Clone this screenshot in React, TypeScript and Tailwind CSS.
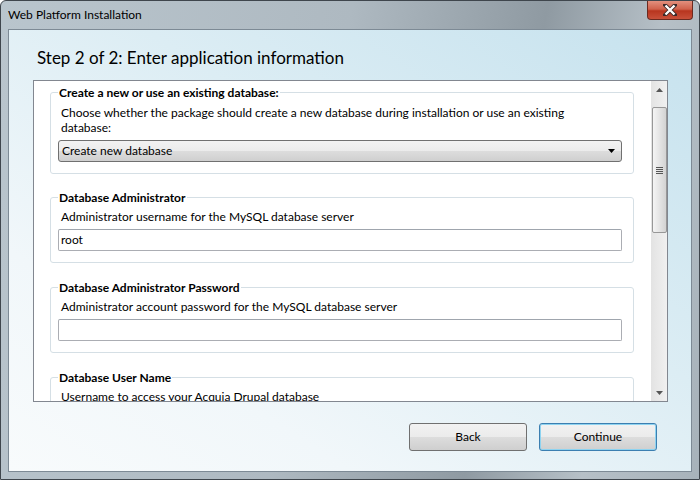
import React from "react";

const font = { fontFamily: "Lato, 'Noto Sans', sans-serif" };

function Group({ title, children }: { title: string; children: React.ReactNode }) {
  return (
    <div className="relative border border-[#d5dfe5] rounded-[3px] pl-[7px] pr-[11px]">
      <span className="absolute left-[7px] -top-[8px] bg-white px-[1px] text-[12px] leading-[15px] font-bold text-black">
        {title}
      </span>
      {children}
    </div>
  );
}

function TextBox({ value }: { value?: string }) {
  return (
    <div className="h-[22px] border border-[#abadb3] border-t-[#9fa5ad] rounded-[2px] bg-white pl-[2px] flex items-center text-[12px] text-black">
      {value}
    </div>
  );
}

export default function App() {
  return (
    <div
      className="w-[700px] h-[480px] relative overflow-hidden rounded-t-[6px] border border-[#3f464d] bg-[linear-gradient(100deg,#b9c5cd_0%,#aeb9c1_45%,#8f9aa2_70%,#b6c0c7_85%,#a7b2ba_100%)]"
      style={font}
    >
      {/* title bar */}
      <div className="h-[28px] flex items-center pl-[7px] text-[12px] text-black">Web Platform Installation</div>
      <div className="absolute right-[6px] top-0 w-[46px] h-[19px] rounded-b-[4px] border border-[#6b2a20] border-t-0 bg-[linear-gradient(#e3907e_0%,#d0624c_45%,#b8351f_55%,#c8503a_100%)] flex items-center justify-center">
        <svg width="14" height="12" viewBox="0 0 14 12">
          <path d="M2 1 L12 11 M12 1 L2 11" stroke="#3b2a2a" strokeWidth="4" strokeLinecap="square" />
          <path d="M2.5 1.5 L11.5 10.5 M11.5 1.5 L2.5 10.5" stroke="#ffffff" strokeWidth="2.4" />
        </svg>
      </div>

      {/* client area */}
      <div className="ml-[7px] w-[684px] h-[443px] border border-[#7d8a95] bg-[linear-gradient(to_bottom_left,#c6e2ee_0%,#dcedf4_40%,#f1f7fa_75%,#f8fbfc_100%)] relative">
        <div className="pl-[28px] pt-[16px] text-[17px] leading-[23px] text-black">
          Step 2 of 2: Enter application information
        </div>

        <div className="ml-[24px] mt-[11px] w-[635px] h-[322px] border border-[#828790] bg-white flex">
          <div className="flex-1 overflow-hidden pl-[16px] pr-[17px] pt-[11px]">
            <Group title="Create a new or use an existing database:">
              <div className="pt-[12px] pl-[3px] text-[12px] leading-[15px] text-black">
                Choose whether the package should create a new database during installation or use an existing
                <br />
                database:
              </div>
              <div className="mt-[5px] mb-[11px] h-[22px] border border-[#707070] rounded-[3px] bg-[linear-gradient(#f2f2f2_0%,#ebebeb_50%,#dddddd_50%,#cfcfcf_100%)] flex items-center justify-between pl-[3px] pr-[6px] text-[12px] text-black">
                <span>Create new database</span>
                <svg width="7" height="4" viewBox="0 0 7 4">
                  <path d="M0 0 H7 L3.5 4 Z" fill="#000" />
                </svg>
              </div>
            </Group>

            <div className="mt-[23px]">
              <Group title="Database Administrator">
                <div className="pt-[11px] pl-[3px] text-[12px] leading-[15px] text-black">
                  Administrator username for the MySQL database server
                </div>
                <div className="mt-[5px] mb-[11px]">
                  <TextBox value="root" />
                </div>
              </Group>
            </div>

            <div className="mt-[24px]">
              <Group title="Database Administrator Password">
                <div className="pt-[11px] pl-[3px] text-[12px] leading-[15px] text-black">
                  Administrator account password for the MySQL database server
                </div>
                <div className="mt-[5px] mb-[11px]">
                  <TextBox />
                </div>
              </Group>
            </div>

            <div className="mt-[24px]">
              <Group title="Database User Name">
                <div className="pt-[11px] pl-[3px] text-[12px] leading-[15px] text-black">
                  Username to access your Acquia Drupal database
                </div>
                <div className="mt-[5px] mb-[11px]">
                  <TextBox />
                </div>
              </Group>
            </div>
          </div>

          {/* scrollbar */}
          <div className="w-[16px] bg-[linear-gradient(to_right,#e3e3e3,#f0f0f0)] flex flex-col items-center">
            <div className="h-[17px] w-full flex items-center justify-center">
              <svg width="7" height="4" viewBox="0 0 7 4">
                <path d="M0 4 H7 L3.5 0 Z" fill="#555" />
              </svg>
            </div>
            <div className="mt-[9px] w-[15px] h-[126px] border border-[#979797] rounded-[2px] bg-[linear-gradient(to_right,#f4f4f4_0%,#e4e4e4_50%,#d3d3d3_100%)] flex items-center justify-center">
              <div className="flex flex-col gap-[1px]">
                <div className="w-[7px] h-[1px] bg-[#555]" />
                <div className="w-[7px] h-[1px] bg-[#555]" />
                <div className="w-[7px] h-[1px] bg-[#555]" />
                <div className="w-[7px] h-[1px] bg-[#555]" />
              </div>
            </div>
            <div className="flex-1" />
            <div className="h-[17px] w-full flex items-center justify-center">
              <svg width="7" height="4" viewBox="0 0 7 4">
                <path d="M0 0 H7 L3.5 4 Z" fill="#555" />
              </svg>
            </div>
          </div>
        </div>

        <div className="flex justify-end gap-[12px] pr-[34px] mt-[21px]">
          <button className="w-[118px] h-[28px] border border-[#707070] rounded-[3px] bg-[linear-gradient(#f2f2f2_0%,#ebebeb_50%,#dddddd_50%,#cfcfcf_100%)] text-[12px] text-black">
            Back
          </button>
          <button className="w-[118px] h-[28px] border border-[#3c7fb1] rounded-[3px] shadow-[inset_0_0_0_1px_#8ed3f0] bg-[linear-gradient(#f2f2f2_0%,#ebebeb_50%,#dddddd_50%,#cfcfcf_100%)] text-[12px] text-black">
            Continue
          </button>
        </div>
      </div>
    </div>
  );
}
